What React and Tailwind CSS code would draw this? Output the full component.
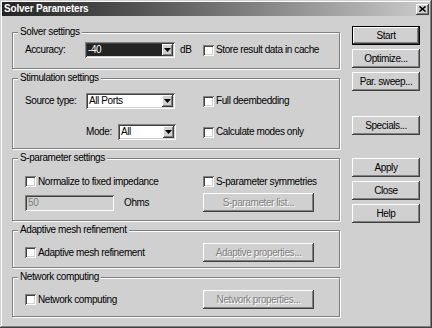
import React from 'react';

const raised = 'shadow-[inset_-1px_-1px_0_#404040,inset_1px_1px_0_#fff,inset_-2px_-2px_0_#808080]';
const raisedDefault = 'shadow-[inset_0_0_0_1px_#000,inset_-2px_-2px_0_#404040,inset_2px_2px_0_#fff,inset_-3px_-3px_0_#808080]';
const sunken = 'shadow-[inset_1px_1px_0_#808080,inset_-1px_-1px_0_#fff,inset_2px_2px_0_#404040,inset_-2px_-2px_0_#d0d0d0]';

function Group({ title, className, children }) {
  return (
    <div className={`border border-[#808080] shadow-[1px_1px_0_#fff,inset_1px_1px_0_#fff] ${className}`}>
      <div className="-mt-[7px] ml-[5px] w-fit px-[2px] bg-[#d0d0d0] leading-[12px]">{title}</div>
      {children}
    </div>
  );
}

function Check({ label }) {
  return (
    <div className="flex items-center gap-[2px]">
      <span className={`inline-block w-[11px] h-[11px] bg-white ${sunken}`} />
      <span>{label}</span>
    </div>
  );
}

function Combo({ value, width, dark }) {
  return (
    <div className={`flex h-[16px] p-[2px] bg-white ${sunken} ${width}`}>
      <div className={`flex-1 flex items-center pl-[1px] ${dark ? 'bg-[#242424] text-white' : 'bg-white'}`}>{value}</div>
      <div className={`w-[11px] flex items-center justify-center bg-[#d0d0d0] ${raised}`}>
        <svg width="7" height="4" viewBox="0 0 7 4">
          <polygon points="0,0 7,0 3.5,4" fill="#000" />
        </svg>
      </div>
    </div>
  );
}

function Button({ children, disabled, isDefault, className = '' }) {
  return (
    <div
      className={`flex items-center justify-center h-[19px] bg-[#d0d0d0] ${isDefault ? raisedDefault : raised} ${
        disabled ? 'text-[#808080] [text-shadow:1px_1px_0_#fff]' : 'text-black'
      } ${className}`}
    >
      {children}
    </div>
  );
}

export default function App() {
  return (
    <div className="w-[432px] h-[328px] p-[2px] bg-[#d0d0d0] flex flex-col font-['Liberation_Sans',Arial,sans-serif] text-[10px] leading-[12px] tracking-[-0.4px] text-black shadow-[inset_-1px_-1px_0_#404040,inset_1px_1px_0_#d0d0d0,inset_-2px_-2px_0_#808080,inset_2px_2px_0_#fff]">
      {/* title bar */}
      <div className="h-[14px] flex items-center pl-[2px] pr-[1px] bg-linear-to-r from-[#242424] to-[#cccccc]">
        <span className="text-white font-bold text-[10px] tracking-[-0.2px]">Solver Parameters</span>
        <div className={`ml-auto w-[13px] h-[11px] flex items-center justify-center bg-[#d0d0d0] ${raised}`}>
          <svg width="7" height="6" viewBox="0 0 7 6">
            <path d="M0.5 0.5 L6.5 5.5 M6.5 0.5 L0.5 5.5" stroke="#000" strokeWidth="1.6" />
          </svg>
        </div>
      </div>

      <div className="flex pl-[10px]">
        {/* left column */}
        <div className="w-[328px] pt-[16px] flex flex-col gap-[9px]">
          <Group title="Solver settings" className="h-[37px]">
            <div className="mt-[4px] pl-[12px] h-[16px] flex items-center">
              <div className="w-[178px] flex items-center">
                <span className="w-[60px]">Accuracy:</span>
                <Combo value="-40" width="w-[90px]" dark />
                <span className="ml-[5px]">dB</span>
              </div>
              <Check label="Store result data in cache" />
            </div>
          </Group>

          <Group title="Stimulation settings" className="h-[71px]">
            <div className="mt-[9px] pl-[12px] h-[16px] flex items-center">
              <div className="w-[178px] flex items-center">
                <span className="w-[61px]">Source type:</span>
                <Combo value="All Ports" width="w-[89px]" />
              </div>
              <Check label="Full deembedding" />
            </div>
            <div className="mt-[15px] pl-[12px] h-[16px] flex items-center">
              <div className="w-[178px] pl-[61px] flex items-center">
                <span className="w-[32px]">Mode:</span>
                <Combo value="All" width="w-[58px]" />
              </div>
              <Check label="Calculate modes only" />
            </div>
          </Group>

          <Group title="S-parameter settings" className="h-[63px]">
            <div className="mt-[12px] pl-[12px] h-[11px] flex items-center">
              <div className="w-[178px]">
                <Check label="Normalize to fixed impedance" />
              </div>
              <Check label="S-parameter symmetries" />
            </div>
            <div className="mt-[6px] pl-[12px] h-[19px] flex items-center">
              <div className="w-[178px] flex items-center">
                <div className={`w-[89px] h-[16px] pl-[3px] flex items-center bg-[#d0d0d0] text-[#808080] ${sunken}`}>50</div>
                <span className="ml-[10px]">Ohms</span>
              </div>
              <Button disabled className="w-[111px]">S-parameter list...</Button>
            </div>
          </Group>

          <Group title="Adaptive mesh refinement" className="h-[38px]">
            <div className="mt-[7px] pl-[12px] h-[19px] flex items-center">
              <div className="w-[178px]">
                <Check label="Adaptive mesh refinement" />
              </div>
              <Button disabled className="w-[111px]">Adaptive properties...</Button>
            </div>
          </Group>

          <Group title="Network computing" className="h-[40px]">
            <div className="mt-[7px] pl-[12px] h-[19px] flex items-center">
              <div className="w-[178px]">
                <Check label="Network computing" />
              </div>
              <Button disabled className="w-[111px]">Network properties...</Button>
            </div>
          </Group>
        </div>

        {/* right column */}
        <div className="ml-[12px] w-[68px] pt-[10px] flex flex-col gap-[4px]">
          <Button isDefault>Start</Button>
          <Button>Optimize...</Button>
          <Button>Par. sweep...</Button>
          <Button className="mt-[21px]">Specials...</Button>
          <Button className="mt-[19px]">Apply</Button>
          <Button>Close</Button>
          <Button>Help</Button>
        </div>
      </div>
    </div>
  );
}
